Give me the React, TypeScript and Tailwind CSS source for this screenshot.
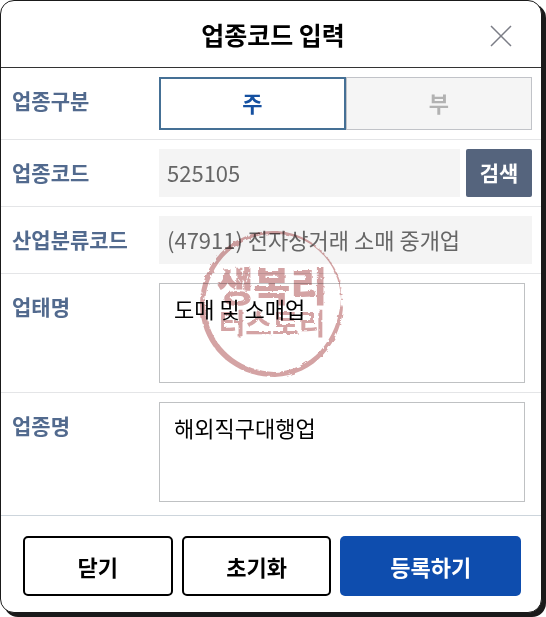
import React from 'react';

const KIND_OPTIONS = ['주', '부'];

interface FormRowProps {
  label: string;
  htmlFor?: string;
  children: React.ReactNode;
}

function FormRow({ label, htmlFor, children }: FormRowProps) {
  const labelClass = 'w-[147px] shrink-0 pt-2 text-[21px] leading-[30px] font-bold text-[#526a8e]';

  return (
    <div className="flex items-start border-b border-[#e4e5e7] py-[9px] pr-[9px] pl-[11px] last-of-type:border-[#cdd5dc]">
      {htmlFor ? (
        <label htmlFor={htmlFor} className={labelClass}>{label}</label>
      ) : (
        <span id="kind-label" className={labelClass}>{label}</span>
      )}
      {children}
    </div>
  );
}

function Stamp() {
  return (
    <svg
      viewBox="0 0 150 150"
      className="pointer-events-none absolute top-[-54px] left-[38px] size-[150px] mix-blend-multiply"
      aria-hidden="true"
    >
      <defs>
        <filter id="rough" x="-5%" y="-5%" width="110%" height="110%">
          <feTurbulence type="fractalNoise" baseFrequency="0.2" numOctaves="2" seed="4" result="noise" />
          <feDisplacementMap in="SourceGraphic" in2="noise" scale="3" />
        </filter>
      </defs>
      <g filter="url(#rough)" fill="#d4a3a4">
        <path
          fillRule="evenodd"
          d="M76 2C115 2 144 32 146 70C148 111 118 147 78 148C37 148 4 118 3 76C3 35 35 2 76 2ZM75 5C39 6 9 36 8 75C10 115 40 142 77 143C114 142 141 112 144 70C143 34 114 3 75 5Z"
        />
        <text x="75" y="72" textAnchor="middle" fontSize="40" fontWeight="900">생복리</text>
        <text x="75" y="106" textAnchor="middle" fontSize="29" fontWeight="700">터스토리</text>
      </g>
      <g stroke="#fff" fill="none">
        <path d="M116 14C133 26 142 40 146 56" strokeWidth="3" strokeDasharray="2 2 4 1 1 2" />
        <path d="M145 54C147 62 147 68 146 78" strokeWidth="5" strokeDasharray="4 1 6 1" />
        <path d="M44 41L48 62M94 41L91 54M121 44L119 64" strokeDasharray="2 3 1 4" />
        <path d="M39 47L44 54M52 43L49 54M113 43L125 50" strokeDasharray="2 2 3 1" />
        <path d="M3 57L8 75" strokeDasharray="2 4" />
      </g>
    </svg>
  );
}

export default function App() {
  const [kind, setKind] = React.useState('주');

  return (
    <div className="pr-1 pb-1 font-['Noto_Sans_CJK_KR','Noto_Sans',sans-serif]">
      <form
        role="dialog"
        aria-labelledby="dialog-title"
        onSubmit={(e) => e.preventDefault()}
        className="rounded-[14px] border border-[#1a1a1a] bg-white shadow-[4px_4px_0_#1a1a1a]"
      >
        <header className="relative flex h-[67px] items-center justify-center border-b border-[#333] pl-1">
          <h1 id="dialog-title" className="text-[25px] leading-9 font-bold text-black">업종코드 입력</h1>
          <button type="button" aria-label="닫기" className="absolute top-[23px] right-[28px] size-6 text-[#7b7d86]">
            <svg viewBox="0 0 24 24" className="size-6" fill="none" stroke="currentColor" strokeWidth="1.5">
              <path d="M2 2L22 22M22 2L2 22" />
            </svg>
          </button>
        </header>

        <FormRow label="업종구분">
          <div role="group" aria-labelledby="kind-label" className="flex flex-1">
            {KIND_OPTIONS.map((option) => (
              <button
                key={option}
                type="button"
                aria-pressed={kind === option}
                onClick={() => setKind(option)}
                className={`h-[53px] w-1/2 pb-[2px] text-[22px] font-bold ${
                  kind === option
                    ? 'border-2 border-[#457095] bg-white text-[#1550a0]'
                    : 'border border-[#c1c3c8] bg-[#f5f5f5] text-[#b2b2b2]'
                }`}
              >
                {option}
              </button>
            ))}
          </div>
        </FormRow>

        <FormRow label="업종코드" htmlFor="code">
          <div className="flex min-w-0 flex-1 gap-[6px]">
            <input id="code" readOnly defaultValue="525105" className="h-12 min-w-0 flex-1 bg-[#f4f4f4] px-2 pb-[2px] text-[22px] text-[#666]" />
            <button type="button" className="h-12 w-[66px] rounded-[2px] bg-[#55647d] text-[21px] font-bold text-white">검색</button>
          </div>
        </FormRow>

        <FormRow label="산업분류코드" htmlFor="industry">
          <input id="industry" readOnly defaultValue="(47911) 전자상거래 소매 중개업" className="h-12 min-w-0 flex-1 bg-[#f4f4f4] px-2 pb-[2px] text-[22px] text-[#666]" />
        </FormRow>

        <FormRow label="업태명" htmlFor="business-type">
          <div className="relative mr-[7px] flex min-w-0 flex-1">
            <textarea id="business-type" defaultValue="도매 및 소매업" className="h-[100px] w-full resize-none border border-[#bfc1c3] px-[14px] py-2 text-[22px] leading-8 text-black" />
            <Stamp />
          </div>
        </FormRow>

        <FormRow label="업종명" htmlFor="business-name">
          <textarea id="business-name" defaultValue="해외직구대행업" className="mr-[7px] mb-1 h-[100px] min-w-0 flex-1 resize-none border border-[#bfc1c3] px-[14px] py-2 text-[22px] leading-8 text-black" />
        </FormRow>

        <footer className="flex gap-[9px] pt-5 pr-5 pb-4 pl-[22px] text-[22px] font-bold">
          <button type="button" className="h-[60px] flex-[146] rounded-[5px] border-2 border-black text-black">닫기</button>
          <button type="reset" className="h-[60px] flex-[146] rounded-[5px] border-2 border-black text-black">초기화</button>
          <button type="submit" className="h-[60px] flex-[181] rounded-[5px] bg-[#0e4dae] text-white">등록하기</button>
        </footer>
      </form>
    </div>
  );
}
